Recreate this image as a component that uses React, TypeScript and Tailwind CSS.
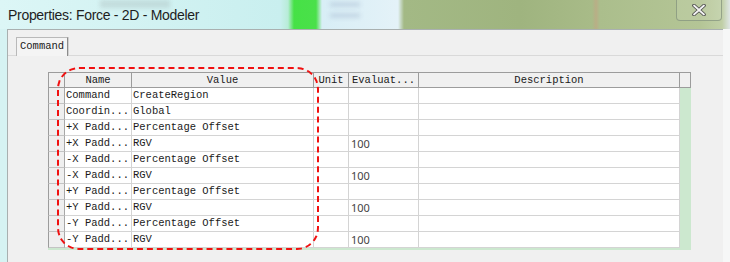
import React from 'react';

const rows: [string, string, string][] = [
  ['Command', 'CreateRegion', ''],
  ['Coordin...', 'Global', ''],
  ['+X Padd...', 'Percentage Offset', ''],
  ['+X Padd...', 'RGV', '100'],
  ['-X Padd...', 'Percentage Offset', ''],
  ['-X Padd...', 'RGV', '100'],
  ['+Y Padd...', 'Percentage Offset', ''],
  ['+Y Padd...', 'RGV', '100'],
  ['-Y Padd...', 'Percentage Offset', ''],
  ['-Y Padd...', 'RGV', '100'],
];

const mono = "font-['Liberation_Mono',monospace] text-[10.5px] text-[#1a1a1a]";

function CloseButton() {
  return (
    <div className="absolute left-[676px] top-0 w-[46px] h-[21px] rounded-b-[4px] border border-t-0 border-[#7f8f7a]/70 bg-white/10 flex items-center justify-center">
      <svg width="14" height="12" viewBox="0 0 14 12">
        <path d="M2 1.5 L12 10.5 M12 1.5 L2 10.5" stroke="#4a4a4a" strokeWidth="3.6" strokeLinecap="round" />
        <path d="M2 1.5 L12 10.5 M12 1.5 L2 10.5" stroke="#f4f4f4" strokeWidth="1.8" strokeLinecap="round" />
      </svg>
    </div>
  );
}

export default function App() {
  return (
    <div className="relative w-[730px] h-[262px] overflow-hidden flex flex-col bg-[#d6f3f3]">
      {/* glass title bar */}
      <div className="relative h-[29px] shrink-0 flex items-center pl-[8px] bg-[linear-gradient(90deg,#dcf6f6_0px,#c9efef_280px,#b8ecd8_288px,#46e146_294px,#4ae04a_316px,#d8eef6_322px,#e4f2f8_398px,#a3b985_404px,#9fb47f_520px,#a8bb88_592px,#b9ae86_596px,#abbe8c_600px,#b4c596_700px,#c0cfa6_722px,#dfe6e6_730px)]">
        <div className="absolute left-[100px] top-0 w-[70px] h-[8px] bg-[#9aa8a8]/30 blur-[2px]" />
        <div className="absolute left-[330px] top-[2px] w-[30px] h-[5px] bg-[#8fa3bf]/30 blur-[2px]" />
        <div className="absolute left-[330px] top-[13px] w-[30px] h-[5px] bg-[#8fa3bf]/30 blur-[2px]" />
        <span className="relative font-['Liberation_Sans',sans-serif] text-[14px] tracking-[-0.3px] text-[#1e1e1e] leading-none pt-[1px]">
          Properties: Force - 2D - Modeler
        </span>
        <CloseButton />
      </div>

      <div className="flex flex-1">
        <div className="w-[7px] bg-[#d6f3f3]" />
        <div className="w-[716px] bg-[#f0f0f0] border-t border-l border-[#a9b0b0] flex flex-col">
          {/* tab strip */}
          <div className="flex pl-[8px] pt-[7px] border-b border-[#d9d9d9] h-[26px]">
            <div className={`h-[19px] px-[3px] bg-[#f4f4f4] border border-b-0 border-[#b9b9b9] border-r-[#8c8c8c] shadow-[1px_0_0_#d0d0d0] flex items-center ${mono}`}>
              Command
            </div>
          </div>

          {/* property grid */}
          <div className="ml-[40px] mt-[16px] w-[643px] bg-[#cce8cf] pb-[2px]">
            <div className="flex h-[16px] bg-[#f0f0f0] border-y border-[#9c9c9c]">
              <div className="w-[17px] border-l border-r border-[#9c9c9c]" />
              {[
                ['Name', 'w-[67px]'],
                ['Value', 'w-[182px]'],
                ['Unit', 'w-[35px]'],
                ['Evaluat...', 'w-[70px]'],
                ['Description', 'w-[261px]'],
              ].map(([t, w]) => (
                <div key={t} className={`${w} border-r border-[#9c9c9c] flex items-center justify-center leading-none ${mono}`}>
                  {t}
                </div>
              ))}
              <div className="w-[11px] border-r border-[#9c9c9c]" />
            </div>
            {rows.map(([name, value, ev], i) => (
              <div key={i} className={`flex h-[16px] ${mono}`}>
                <div className="w-[17px] bg-[#efefef] border-l border-r border-b border-l-[#9c9c9c] border-r-[#a8a8a8] border-b-[#c4c4c4]" />
                <div className="w-[67px] bg-white border-r border-b border-[#d4d4d4] pl-[1px] leading-[15px] whitespace-nowrap overflow-hidden">{name}</div>
                <div className="w-[182px] bg-white border-r border-b border-[#d4d4d4] pl-[1px] leading-[15px] whitespace-nowrap">{value}</div>
                <div className="w-[35px] bg-white border-r border-b border-[#d4d4d4]" />
                <div className="w-[70px] bg-white border-r border-b border-[#d4d4d4] pl-[2px] leading-[15px] font-['Noto_Sans',sans-serif] text-[11px] text-[#444]">{ev}</div>
                <div className="w-[261px] bg-white border-r border-b border-[#d4d4d4]" />
              </div>
            ))}
          </div>
        </div>
        <div className="flex-1 bg-[#f6f7f7]" />
      </div>

      {/* red dashed annotation */}
      <div className="absolute left-[57px] top-[67px] w-[262px] h-[183px] border-2 border-dashed border-[#f01010] rounded-[22px] pointer-events-none" />
    </div>
  );
}
